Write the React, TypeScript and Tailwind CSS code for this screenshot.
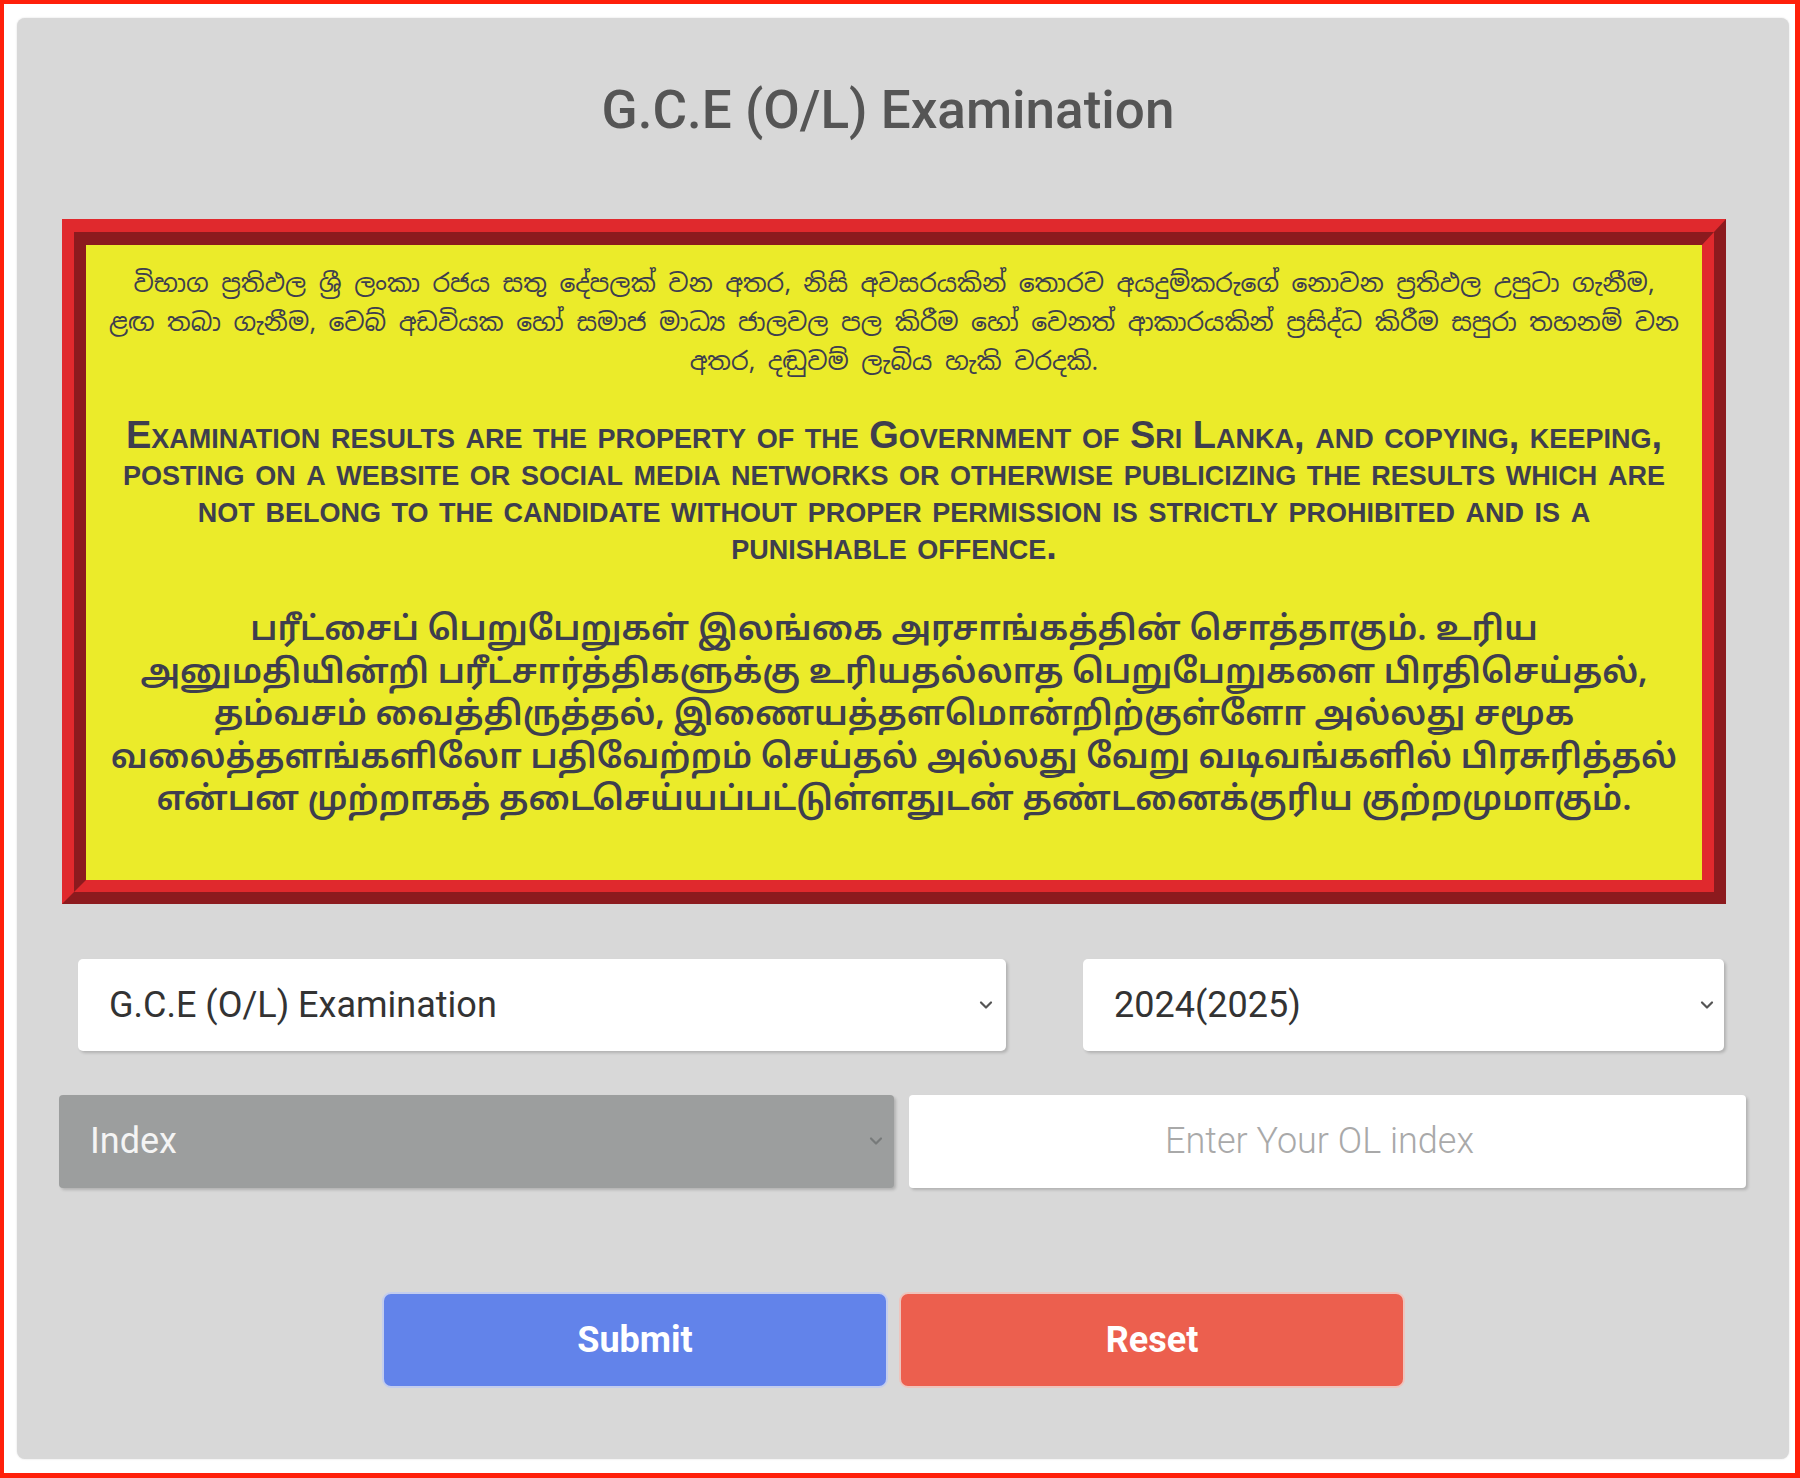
import React from "react";

function Chevron({ className }: { className?: string }) {
  return (
    <svg viewBox="0 0 14 9" className={className} fill="none" stroke="currentColor" strokeWidth="2.2" strokeLinecap="round" strokeLinejoin="round">
      <path d="M2 2l5 5 5-5" />
    </svg>
  );
}

function SelectBox({
  value,
  options,
  className,
  textClass,
  chevronClass
}: {
  value: string;
  options: string[];
  className: string;
  textClass: string;
  chevronClass: string;
}) {
  return (
    <div className={`relative ${className}`}>
      <select
        defaultValue={value}
        className={`h-full w-full appearance-none bg-transparent outline-none ${textClass}`}
      >
        {options.map((o) => (
          <option key={o}>{o}</option>
        ))}
      </select>
      <Chevron className={`pointer-events-none absolute top-1/2 h-[9px] w-[14px] -translate-y-1/2 ${chevronClass}`} />
    </div>
  );
}

export default function App() {
  return (
    <div className="box-border h-[1478px] w-[1800px] border-b-[5px] border-l-4 border-r-[5px] border-t-4 border-[#ff200a] bg-white pb-[14px] pl-[13px] pr-[6px] pt-[14px]">
      <div className="h-full rounded-lg bg-[#d8d8d8] pl-[45px] pr-[63px] pt-[66px] shadow-[0_0_2px_rgba(0,0,0,0.15)] font-['Roboto',sans-serif]">
        <h1 className="pr-[12px] text-center text-[53px] font-medium leading-none text-[#555555]">
          G.C.E (O/L) Examination
        </h1>

        <div className="mt-[82px] border-b-[12px] border-l-[12px] border-r-[12px] border-t-[13px] border-b-[#8c1a1e] border-l-[#e0292d] border-r-[#8c1a1e] border-t-[#e0292d]">
          <div className="border-b-[12px] border-l-[12px] border-r-[12px] border-t-[13px] border-b-[#e0292d] border-l-[#8c1a1e] border-r-[#e0292d] border-t-[#8c1a1e] bg-[#ebeb2a] px-[16px] pb-[56px] pt-[19px] text-center text-[#3e3e4e]">
            <p className="text-[25px] leading-[39px] font-['Noto_Sans_Sinhala','Iskoola_Pota','Noto_Sans',sans-serif]">
              විභාග ප්‍රතිඵල ශ්‍රී ලංකා රජය සතු දේපලක් වන අතර, නිසි අවසරයකින් තොරව අයදුම්කරුගේ නොවන ප්‍රතිඵල උපුටා ගැනීම,
              <br />
              ළඟ තබා ගැනීම, වෙබ් අඩවියක හෝ සමාජ මාධ්‍ය ජාලවල පල කිරීම හෝ වෙනත් ආකාරයකින් ප්‍රසිද්ධ කිරීම සපුරා තහනම් වන
              <br />
              අතර, දඬුවම් ලැබිය හැකි වරදකි.
            </p>

            <p className="mt-[36px] text-[38px] font-bold leading-[37px] [font-variant:small-caps] font-['Liberation_Sans',Arial,sans-serif]">
              Examination results are the property of the Government of Sri Lanka, and copying, keeping,
              <br />
              posting on a website or social media networks or otherwise publicizing the results which are
              <br />
              not belong to the candidate without proper permission is strictly prohibited and is a
              <br />
              punishable offence.
            </p>

            <p className="mt-[46px] text-[33.5px] font-semibold leading-[42.5px] font-['Noto_Sans_Tamil','Latha','Noto_Sans',sans-serif]">
              பரீட்சைப் பெறுபேறுகள் இலங்கை அரசாங்கத்தின் சொத்தாகும். உரிய
              <br />
              அனுமதியின்றி பரீட்சார்த்திகளுக்கு உரியதல்லாத பெறுபேறுகளை பிரதிசெய்தல்,
              <br />
              தம்வசம் வைத்திருத்தல், இணையத்தளமொன்றிற்குள்ளோ அல்லது சமூக
              <br />
              வலைத்தளங்களிலோ பதிவேற்றம் செய்தல் அல்லது வேறு வடிவங்களில் பிரசுரித்தல்
              <br />
              என்பன முற்றாகத் தடைசெய்யப்பட்டுள்ளதுடன் தண்டனைக்குரிய குற்றமுமாகும்.
            </p>
          </div>
        </div>

        <div className="mt-[55px] flex pl-[16px]">
          <SelectBox
            value="G.C.E (O/L) Examination"
            options={["G.C.E (O/L) Examination"]}
            className="h-[92px] w-[928px] rounded-[5px] bg-white shadow-[2px_2px_3px_rgba(0,0,0,0.18)]"
            textClass="pl-[31px] pr-[50px] text-[36px] text-[#333333]"
            chevronClass="right-[13px] text-[#555555]"
          />
          <SelectBox
            value="2024(2025)"
            options={["2024(2025)", "2023(2024)", "2022(2023)"]}
            className="ml-[77px] h-[92px] w-[641px] rounded-[5px] bg-white shadow-[2px_2px_3px_rgba(0,0,0,0.18)]"
            textClass="pl-[31px] pr-[50px] text-[36px] text-[#333333]"
            chevronClass="right-[10px] text-[#555555]"
          />
        </div>

        <div className="-ml-[3px] -mr-[20px] mt-[44px] flex gap-[15px]">
          <SelectBox
            value="Index"
            options={["Index", "Name"]}
            className="h-[93px] w-[835px] rounded-[4px] bg-[#9c9e9e] shadow-[2px_2px_3px_rgba(0,0,0,0.18)]"
            textClass="pl-[31px] pr-[50px] text-[36px] text-[#f4f4f4]"
            chevronClass="right-[11px] text-[#777a7a]"
          />
          <input
            type="text"
            placeholder="Enter Your OL index"
            className="h-[93px] flex-1 rounded-[4px] bg-white pr-[16px] text-center text-[36px] font-light text-[#333333] outline-none shadow-[2px_2px_3px_rgba(0,0,0,0.18)] placeholder:text-[#a9a9a9]"
          />
        </div>

        <div className="mt-[104px] flex gap-[11px] pl-[320px]">
          <button
            type="button"
            className="h-[96px] w-[506px] rounded-[9px] border-2 border-[#c3cdee] bg-[#6283ea] text-[36px] font-bold text-white"
          >
            Submit
          </button>
          <button
            type="button"
            className="h-[96px] w-[506px] rounded-[9px] border-2 border-[#eec4bd] bg-[#ec5f4e] text-[36px] font-bold text-white"
          >
            Reset
          </button>
        </div>
      </div>
    </div>
  );
}
